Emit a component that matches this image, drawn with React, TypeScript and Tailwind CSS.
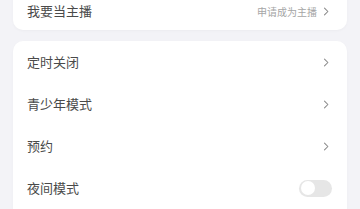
import React from 'react';

const rows = ['定时关闭', '青少年模式', '预约'];

function Chevron({ className = '' }: { className?: string }) {
  return (
    <svg viewBox="0 0 8 12" className={className} fill="none" stroke="currentColor" strokeWidth="1.4" strokeLinecap="round" strokeLinejoin="round">
      <path d="M2 1.5 6.5 6 2 10.5" />
    </svg>
  );
}

export default function App() {
  return (
    <div
      className="w-[360px] h-[209px] overflow-hidden bg-[#f3f3f7] px-[13px] flex flex-col gap-[11px]"
      style={{ fontFamily: '"Noto Sans CJK SC", "Noto Sans", sans-serif' }}
    >
      <div className="bg-white rounded-b-[10px] h-[42px] shrink-0 -mt-[12px] pt-[12px] pb-[8px] flex items-center justify-between pl-[14px] pr-[18px] shadow-[0_1px_3px_rgba(0,0,0,0.03)]">
        <span className="text-[13px] text-[#4a4a4a]">我要当主播</span>
        <span className="flex items-center gap-[6px] text-[10px] text-[#a5a5a5]">
          申请成为主播
          <Chevron className="w-[6px] h-[9px] text-[#888]" />
        </span>
      </div>
      <div className="bg-white rounded-t-[10px] flex-1 flex flex-col shadow-[0_1px_3px_rgba(0,0,0,0.03)]">
        {rows.map((r) => (
          <div key={r} className="h-[42px] shrink-0 flex items-center justify-between pl-[14px] pr-[18px]">
            <span className="text-[13px] text-[#4a4a4a]">{r}</span>
            <Chevron className="w-[6px] h-[9px] text-[#8a8a8a]" />
          </div>
        ))}
        <div className="h-[42px] shrink-0 flex items-center justify-between pl-[14px] pr-[15px]">
          <span className="text-[13px] text-[#4a4a4a]">夜间模式</span>
          <div className="w-[33px] h-[17px] rounded-full bg-[#e6e6e6] flex items-center px-[1.5px]">
            <div className="w-[14px] h-[14px] rounded-full bg-white" />
          </div>
        </div>
      </div>
    </div>
  );
}
